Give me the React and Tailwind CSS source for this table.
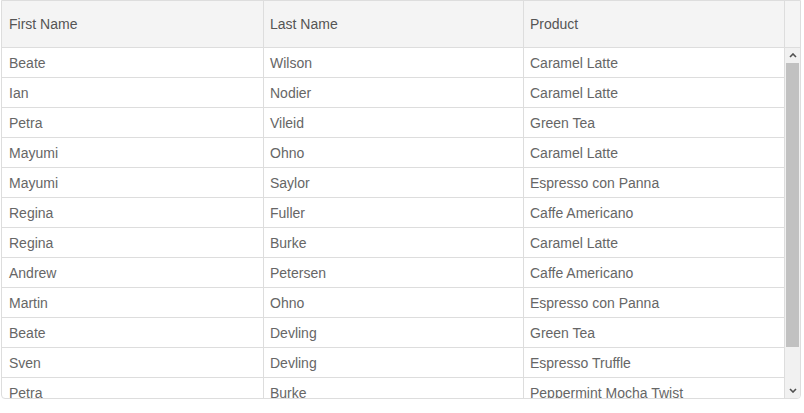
import React from 'react';

const rows = [
  ['Beate', 'Wilson', 'Caramel Latte'],
  ['Ian', 'Nodier', 'Caramel Latte'],
  ['Petra', 'Vileid', 'Green Tea'],
  ['Mayumi', 'Ohno', 'Caramel Latte'],
  ['Mayumi', 'Saylor', 'Espresso con Panna'],
  ['Regina', 'Fuller', 'Caffe Americano'],
  ['Regina', 'Burke', 'Caramel Latte'],
  ['Andrew', 'Petersen', 'Caffe Americano'],
  ['Martin', 'Ohno', 'Espresso con Panna'],
  ['Beate', 'Devling', 'Green Tea'],
  ['Sven', 'Devling', 'Espresso Truffle'],
  ['Petra', 'Burke', 'Peppermint Mocha Twist'],
];

export default function App() {
  return (
    <div className="w-[804px] h-[413px] bg-white" style={{ fontFamily: '"Liberation Sans", Arial, sans-serif' }}>
      <div className="ml-px w-[800px] h-[399px] border border-[#dddddd] rounded-b-[4px] overflow-hidden flex flex-col text-[14px]">
        {/* Header */}
        <div className="flex h-[47px] shrink-0 bg-[#f4f4f4] border-b border-[#dddddd] text-[#555]">
          <div className="w-[262px] border-r border-[#dddddd] pl-[7px] flex items-center">First Name</div>
          <div className="w-[260px] border-r border-[#dddddd] pl-[6px] flex items-center">Last Name</div>
          <div className="w-[261px] border-r border-[#dddddd] pl-[6px] flex items-center">Product</div>
          <div className="flex-1"></div>
        </div>

        {/* Body */}
        <div className="flex flex-1 min-h-0">
          <div className="w-[783px] overflow-hidden text-[#666]">
            {rows.map((r, i) => (
              <div key={i} className="flex h-[30px] border-b border-[#dddddd]">
                <div className="w-[262px] border-r border-[#dddddd] pl-[7px] pt-[2px] flex items-center">{r[0]}</div>
                <div className="w-[260px] border-r border-[#dddddd] pl-[6px] pt-[2px] flex items-center">{r[1]}</div>
                <div className="w-[261px] border-r border-[#dddddd] pl-[6px] pt-[2px] flex items-center">{r[2]}</div>
              </div>
            ))}
          </div>

          {/* Scrollbar */}
          <div className="w-[15px] bg-[#f1f1f1] flex flex-col items-center">
            <div className="h-[15px] w-full flex items-center justify-center">
              <svg width="8" height="5" viewBox="0 0 8 5">
                <path d="M1 4 L4 1 L7 4" fill="none" stroke="#505050" strokeWidth="1.6" />
              </svg>
            </div>
            <div className="w-[13px] h-[284px] bg-[#c1c1c1]"></div>
            <div className="flex-1"></div>
            <div className="h-[15px] w-full flex items-center justify-center">
              <svg width="8" height="5" viewBox="0 0 8 5">
                <path d="M1 1 L4 4 L7 1" fill="none" stroke="#505050" strokeWidth="1.6" />
              </svg>
            </div>
          </div>
        </div>
      </div>
    </div>
  );
}
